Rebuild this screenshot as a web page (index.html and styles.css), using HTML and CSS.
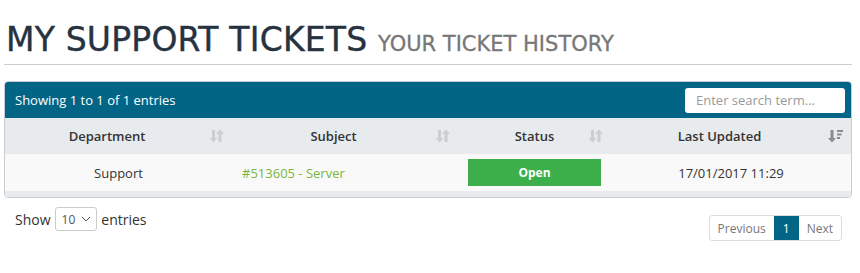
FILE: index.html
```html
<!DOCTYPE html>
<html lang="en">
<head>
    <meta charset="UTF-8">
    <meta name="viewport" content="width=device-width, initial-scale=1.0">
    <title>My Support Tickets</title>
    <link rel="stylesheet" href="styles.css">
</head>
<body>
    <div class="page">
        <!-- Page heading -->
        <div class="page-header">
            <h1>MY SUPPORT TICKETS <small>YOUR TICKET HISTORY</small></h1>
        </div>

        <!-- Tickets table panel -->
        <div class="table-panel">
            <div class="panel-top">
                <span class="info">Showing 1 to 1 of 1 entries</span>
                <input type="text" class="search" placeholder="Enter search term...">
            </div>
            <table class="tickets">
                <colgroup>
                    <col style="width: 227px">
                    <col style="width: 226px">
                    <col style="width: 153px">
                    <col style="width: 240px">
                </colgroup>
                <thead>
                    <tr>
                        <th><div class="th-inner"><span class="label">Department</span><span class="sort"><svg width="15" height="14" viewBox="0 0 15 14"><path d="M3 1h3v8h2.5L4.5 13.5 0.5 9H3z" fill="#cbcfd2"/><path d="M9.5 13h3V5h2.5l-4-4.5L7 5h2.5z" fill="#cbcfd2"/></svg></span></div></th>
                        <th><div class="th-inner"><span class="label">Subject</span><span class="sort"><svg width="15" height="14" viewBox="0 0 15 14"><path d="M3 1h3v8h2.5L4.5 13.5 0.5 9H3z" fill="#cbcfd2"/><path d="M9.5 13h3V5h2.5l-4-4.5L7 5h2.5z" fill="#cbcfd2"/></svg></span></div></th>
                        <th><div class="th-inner"><span class="label label-status">Status</span><span class="sort"><svg width="15" height="14" viewBox="0 0 15 14"><path d="M3 1h3v8h2.5L4.5 13.5 0.5 9H3z" fill="#cbcfd2"/><path d="M9.5 13h3V5h2.5l-4-4.5L7 5h2.5z" fill="#cbcfd2"/></svg></span></div></th>
                        <th><div class="th-inner"><span class="label">Last Updated</span><span class="sort"><svg width="15" height="14" viewBox="0 0 15 14"><path d="M2.5 1h3v8H8l-4 4.5L0 9h2.5z" fill="#8a8d90"/><rect x="9" y="1" width="6" height="2" fill="#8a8d90"/><rect x="9" y="4.5" width="4.5" height="2" fill="#8a8d90"/><rect x="9" y="8" width="3" height="2" fill="#8a8d90"/></svg></span></div></th>
                    </tr>
                </thead>
                <tbody>
                    <tr>
                        <td>Support</td>
                        <td class="subject"><a href="#">#513605 - Server</a></td>
                        <td><span class="status-open">Open</span></td>
                        <td>17/01/2017 11:29</td>
                    </tr>
                </tbody>
            </table>
            <div class="panel-bottom"></div>
        </div>

        <!-- Length selector and pagination -->
        <div class="table-footer">
            <label class="length">Show
                <span class="select">10 <svg width="10" height="6" viewBox="0 0 10 6"><path d="M1 1l4 4 4-4" fill="none" stroke="#555" stroke-width="1"/></svg></span>
                entries</label>
            <ul class="pagination">
                <li class="disabled">Previous</li>
                <li class="active">1</li>
                <li class="disabled">Next</li>
            </ul>
        </div>
    </div>
</body>
</html>
```

FILE: styles.css
```css
/* Base page styles */
body {
    margin: 0;
    font-family: "Open Sans", Arial, sans-serif;
    font-size: 13px;
    color: #333;
    background: #fff;
}

.page {
    padding: 0 8px 0 4px;
}

/* Page heading with grey subtitle */
.page-header {
    border-bottom: 1px solid #cccccc;
    padding-top: 21px;
    padding-bottom: 1px;
    margin-bottom: 16px;
}

.page-header h1 {
    margin: 0;
    padding-left: 2px;
    font-family: "DejaVu Sans", sans-serif;
    font-weight: normal;
    font-size: 33px;
    line-height: 37px;
    color: #26323f;
    letter-spacing: 0.2px;
    -webkit-text-stroke: 0.4px #26323f;
}

.page-header small {
    font-size: 21px;
    color: #777777;
    letter-spacing: 0;
    -webkit-text-stroke: 0.3px #777777;
}

/* Table panel */
.table-panel {
    border: 1px solid #c9cdd1;
    border-radius: 4px;
    overflow: hidden;
}

.panel-top {
    display: flex;
    align-items: center;
    justify-content: space-between;
    height: 36px;
    padding: 0 6px 0 10px;
    background-color: #036586;
    color: #ffffff;
}

.panel-top .info {
    font-size: 13px;
}

.search {
    width: 160px;
    height: 25px;
    box-sizing: border-box;
    border: none;
    border-radius: 3px;
    padding: 0 11px;
    font-family: "Open Sans", Arial, sans-serif;
    font-size: 13px;
    color: #555;
}

.search::placeholder {
    color: #9a9a9a;
}

.tickets {
    width: 100%;
    border-collapse: collapse;
    table-layout: fixed;
}

.tickets th {
    height: 36px;
    padding: 0 8px;
    background-color: #e7ebee;
    font-weight: 600;
    font-size: 13px;
    color: #333;
}

.th-inner {
    display: flex;
    align-items: center;
}

.th-inner .label {
    flex: 1;
    text-align: center;
    margin-right: 8px;
}

.th-inner .label-status {
    margin-right: 0;
    padding-left: 15px;
}

.sort {
    display: flex;
    width: 15px;
}

.tickets td {
    height: 37px;
    padding: 0 10px;
    background-color: #f9f9f9;
    text-align: center;
    font-size: 13px;
}

.tickets td.subject {
    text-align: left;
}

.tickets td a {
    color: #7cb53a;
    text-decoration: none;
}

.status-open {
    display: block;
    height: 27px;
    line-height: 27px;
    background-color: #3cae4a;
    color: #ffffff;
    font-weight: bold;
    font-size: 12px;
}

.panel-bottom {
    height: 6px;
    background-color: #e7ebee;
}

/* Footer with length select and pagination */
.table-footer {
    display: flex;
    justify-content: space-between;
    padding: 9px 10px 0 11px;
}

.length {
    display: flex;
    align-items: center;
    gap: 4px;
    height: 24px;
    font-size: 14px;
}

.select {
    display: inline-flex;
    align-items: center;
    gap: 6px;
    height: 24px;
    box-sizing: border-box;
    padding: 0 5px 0 6px;
    border: 1px solid #cccccc;
    border-radius: 3px;
    font-size: 12px;
    color: #555;
}

.pagination {
    display: flex;
    list-style: none;
    margin: 8px 0 0 0;
    padding: 0;
    border: 1px solid #dddddd;
    border-radius: 3px;
    height: 24px;
}

.pagination li {
    display: flex;
    align-items: center;
    padding: 0 8px;
    font-size: 12px;
    color: #777;
}

.pagination li.active {
    background-color: #036586;
    color: #ffffff;
    padding: 0 9px;
}
```
